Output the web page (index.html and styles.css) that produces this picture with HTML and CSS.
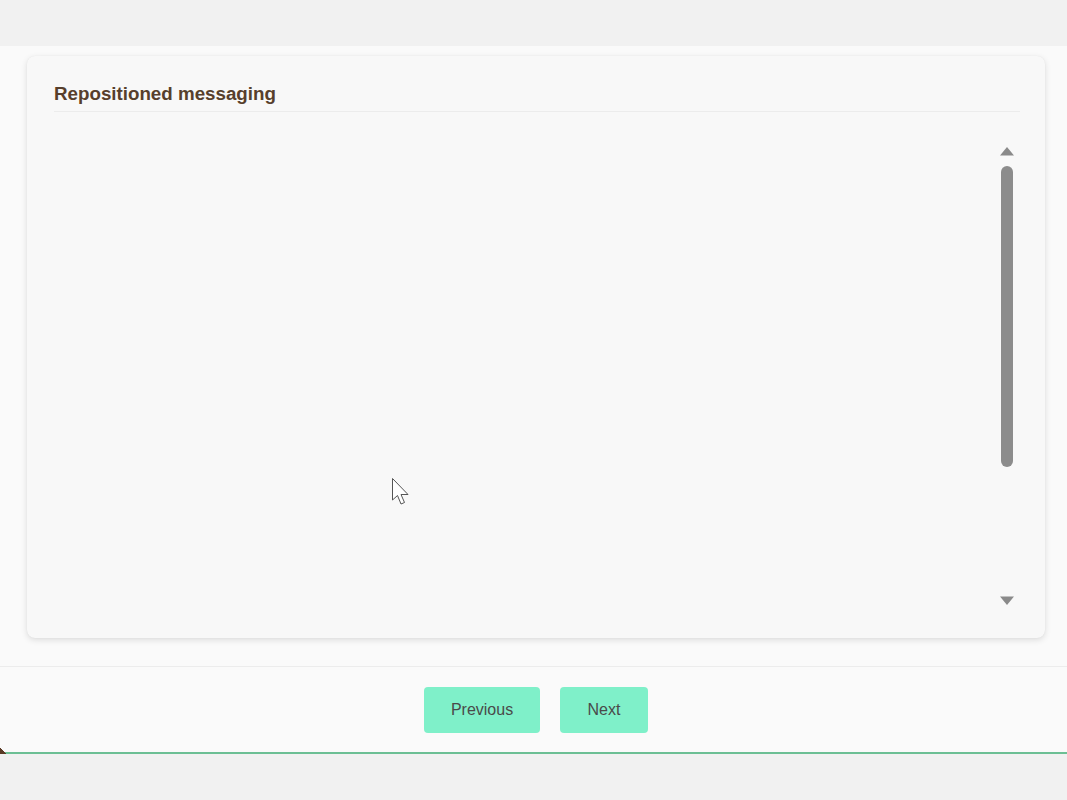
FILE: index.html
```html
<!DOCTYPE html>
<html>
<head>
<meta charset="utf-8">
<link rel="stylesheet" href="styles.css">
</head>
<body>
<div class="topbar"></div>
<div class="panel">
  <div class="card">
    <div class="card-header">Repositioned messaging</div>
    <div class="card-body">
      <div class="content"></div>
      <div class="scroll">
        <svg class="arrow" width="16" height="10" viewBox="0 0 16 10"><path d="M1 9.5 L8 1 L15 9.5 Z" fill="#8a8a8a"/></svg>
        <div class="track"><div class="thumb"></div></div>
        <svg class="arrow" width="16" height="10" viewBox="0 0 16 10"><path d="M1 0.5 L8 9 L15 0.5 Z" fill="#8a8a8a"/></svg>
      </div>
    </div>
  </div>
  <div class="footer">
    <button class="btn btn-prev">Previous</button>
    <button class="btn btn-next">Next</button>
  </div>
  <div class="corner"></div>
</div>
<svg class="cursor" width="22" height="32" viewBox="0 0 22 32"><path d="M1.5 1.5 L1.5 23 L6.5 18.5 L10 27 L13.5 25.5 L10 17.5 L17 17.5 Z" fill="#ffffff" stroke="#555" stroke-width="1" stroke-linejoin="round"/></svg>
</body>
</html>
```
FILE: styles.css
```css
html, body {
  margin: 0;
  padding: 0;
  background: #f1f1f1;
  font-family: "Liberation Sans", Arial, sans-serif;
}
.topbar {
  height: 46px;
}
.panel {
  position: relative;
  background: #fafafa;
  height: 706px;
  border-bottom: 2px solid #6cbf94;
  display: flex;
  flex-direction: column;
}
.card {
  margin: 10px 22px 0 27px;
  height: 582px;
  background: #f8f8f8;
  border-radius: 8px;
  box-shadow: 0 2px 6px rgba(0,0,0,0.12), 0 0 1px rgba(0,0,0,0.08);
  display: flex;
  flex-direction: column;
}
.card-header {
  margin: 0 25px 0 27px;
  padding: 26px 0 5px;
  font-size: 18.75px;
  line-height: 24px;
  font-weight: bold;
  color: #573f2c;
  border-bottom: 1px solid #ececec;
}
.card-body {
  flex: 1;
  display: flex;
  padding: 34px 30px 32px 27px;
}
.content {
  flex: 1;
}
.scroll {
  width: 16px;
  display: flex;
  flex-direction: column;
  align-items: center;
}
.arrow {
  display: block;
}
.track {
  flex: 1;
  padding: 10px 0 128px;
  display: flex;
  justify-content: center;
}
.thumb {
  width: 12px;
  height: 301px;
  background: #8c8c8c;
  border-radius: 6px;
}
.footer {
  margin-top: 28px;
  border-top: 1px solid #ececec;
  flex: 1;
  display: flex;
  justify-content: center;
  align-items: flex-start;
  gap: 20px;
  padding: 20px 0 0 5px;
}
.btn {
  height: 46px;
  border: none;
  border-radius: 4px;
  background: #7ff0c9;
  color: #4a4a4a;
  font-family: "Liberation Sans", Arial, sans-serif;
  font-size: 16px;
  padding: 0;
}
.btn-prev {
  width: 116px;
}
.btn-next {
  width: 88px;
}
.corner {
  position: absolute;
  left: 0;
  bottom: -2px;
  width: 6px;
  height: 6px;
  background: linear-gradient(to top right, #5a3a25 50%, transparent 50%);
}
.cursor {
  position: absolute;
  left: 391px;
  top: 477px;
}
```
